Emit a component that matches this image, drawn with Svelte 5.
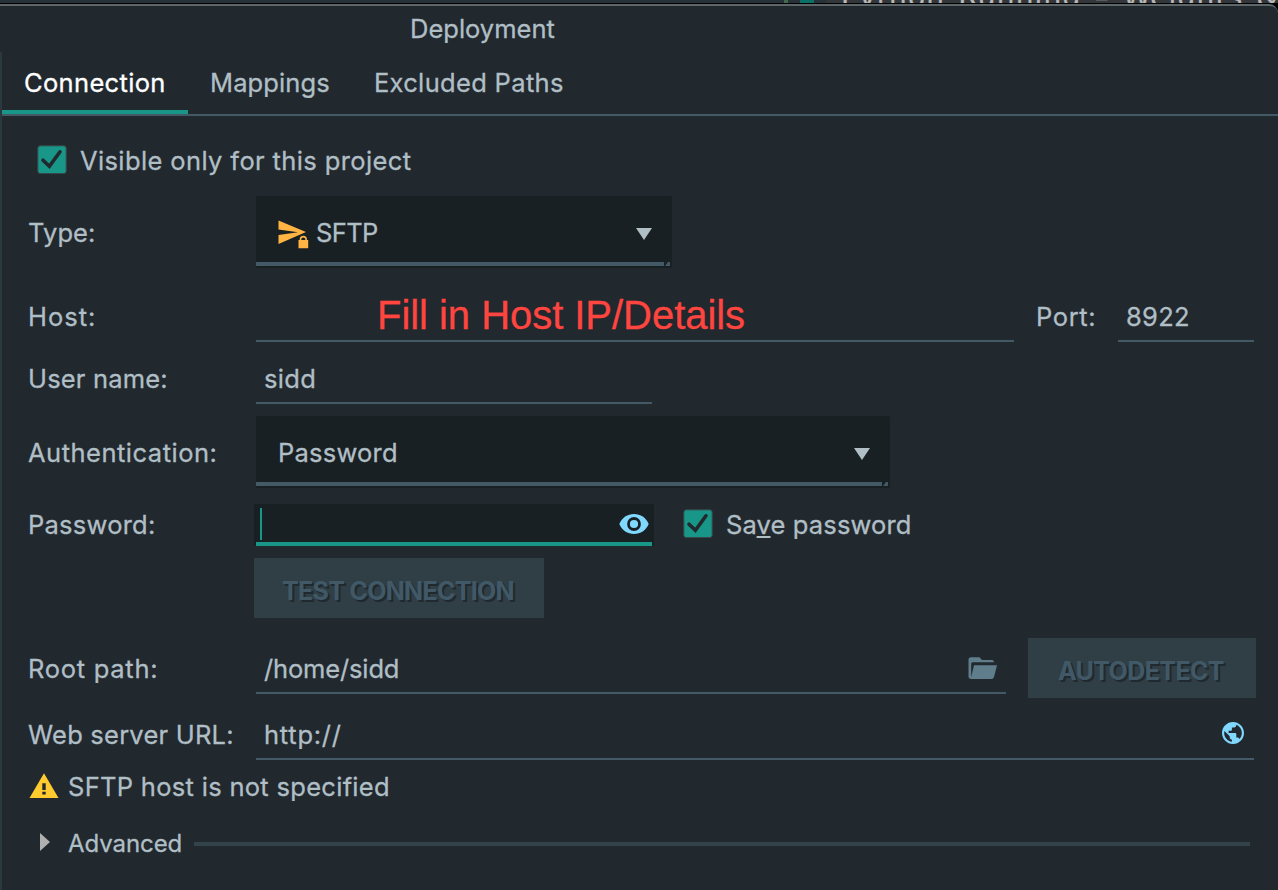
<script>
  const tabs = [
    { name: 'Connection', spacing: 0.34 },
    { name: 'Mappings', spacing: 0.12 },
    { name: 'Excluded Paths', spacing: 0.33 },
  ];
</script>

{#snippet check()}
  <svg class="check" width="30" height="30" viewBox="0 0 30 30">
    <rect x="0.8" y="0.8" width="28.4" height="27.8" rx="2.4" fill="#189687" stroke="#3b4448" stroke-width="1" />
    <path d="M6 15.2 L12.4 21.2 L23 6.8" fill="none" stroke="#21282e" stroke-width="3.6" stroke-linecap="round" />
  </svg>
{/snippet}

{#snippet text(value, spacing)}
  <span style:letter-spacing="{spacing}px">{value}</span>
{/snippet}

<div class="window">
  <div class="behind">
    <i class="green"></i><i class="teal"></i>
    <div class="pane"><span>Python Running – Weights &amp;</span></div>
  </div>
  <header>{@render text('Deployment', 0)}</header>
  <main>
    <nav>
      {#each tabs as tab, i}
        <div class="tab" class:active={i === 0}>{@render text(tab.name, tab.spacing)}</div>
      {/each}
    </nav>
    <div class="row visible">{@render check()}{@render text('Visible only for this project', 0.38)}</div>
    <div class="row type">
      <div class="label">{@render text('Type:', 0.1)}</div>
      <div class="select">
        <svg width="32" height="30" viewBox="0 0 32 30" fill="#ffb443">
          <path d="M0.5 0.5 L28 12 L0.5 24 V15 L20 12.2 L0.5 9.5Z" />
          <path d="M20.5 20 H21.7 V19.3 A3.6 3.6 0 0 1 28.9 19.3 V20 H30.2 V28.2 H20.5Z" />
          <path d="M23.3 20 V19.4 A2 2 0 0 1 27.3 19.4 V20Z" fill="#192023" />
        </svg>
        {@render text('SFTP', -0.6)}<b class="down"></b><em></em>
      </div>
    </div>
    <div class="row host">
      <div class="label">{@render text('Host:', 1)}</div>
      <div class="field"><strong>Fill in Host IP/Details</strong></div>
      <div class="port">{@render text('Port:', 0.6)}</div>
      <div class="field number">{@render text('8922', 0.3)}</div>
    </div>
    <div class="row user">
      <div class="label">{@render text('User name:', 0.17)}</div>
      <div class="field">{@render text('sidd', 0.3)}</div>
    </div>
    <div class="row auth">
      <div class="label">{@render text('Authentication:', 0.5)}</div>
      <div class="select">{@render text('Password', 0.22)}<b class="down"></b><em></em></div>
    </div>
    <div class="row pass">
      <div class="label">{@render text('Password:', 0.24)}</div>
      <div class="secret">
        <i></i>
        <svg width="30" height="20" viewBox="0 0 30 20">
          <path d="M0.3 10 C3 3.5 8.5 0 15 0 S27 3.5 29.7 10 C27 16.5 21.5 20 15 20 S3 16.5 0.3 10Z" fill="#80d8ff" />
          <circle cx="15" cy="10" r="5.5" fill="#80d8ff" stroke="#192023" stroke-width="2.8" />
        </svg>
      </div>
      {@render check()}
      <span class="save">Sa<u>v</u>e password</span>
    </div>
    <div class="row test"><button>{@render text('TEST CONNECTION', -0.7)}</button></div>
    <div class="row root">
      <div class="label">{@render text('Root path:', 0.72)}</div>
      <div class="field">
        {@render text('/home/sidd', -0.15)}
        <svg width="30" height="23" viewBox="0 0 30 23" fill="#607d8b">
          <path d="M3 0.3 H11.5 L14 3 H24 Q26 3 26 5.2 H4.5 Q3.2 5.2 3.2 7 V22 Q0.5 21.8 0.5 19.5 V2.8 Q0.5 0.3 3 0.3Z" />
          <path d="M6 8.3 H29 L26 20 Q25.5 22 23.5 22 H2.7Z" />
        </svg>
      </div>
      <button>{@render text('AUTODETECT', -0.6)}</button>
    </div>
    <div class="row web">
      <div class="label">{@render text('Web server URL:', 0.22)}</div>
      <div class="field">
        {@render text('http://', 0.75)}
        <svg width="22" height="22" viewBox="2 2 20 20" fill="#80d8ff">
          <path d="M12 2C6.48 2 2 6.48 2 12s4.48 10 10 10 10-4.48 10-10S17.52 2 12 2zm-1 17.93c-3.95-.49-7-3.85-7-7.93 0-.62.08-1.21.21-1.79L9 15v1c0 1.1.9 2 2 2v1.93zm6.9-2.54c-.26-.81-1-1.39-1.9-1.39h-1v-3c0-.55-.45-1-1-1H8v-2h2c.55 0 1-.45 1-1V7h2c1.1 0 2-.9 2-2v-.41c2.93 1.19 5 4.06 5 7.41 0 2.08-.8 3.97-2.1 5.39z" />
        </svg>
      </div>
    </div>
    <div class="row warn">
      <svg width="30" height="26" viewBox="0 0 30 26">
        <path d="M15 0.2 L29.5 25 H0.5Z" fill="#ffcb2f" />
        <path d="M13.3 10.3 H16.7 V17 H13.3Z M13.3 18.8 H16.7 V21.4 H13.3Z" fill="#21282e" />
      </svg>
      {@render text('SFTP host is not specified', 0.3)}
    </div>
    <div class="row advanced"><b class="right"></b>{@render text('Advanced', -0.07)}<hr /></div>
  </main>
</div>

<style>
  :global(body) { margin: 0; background: #21282e; }
  * { box-sizing: border-box; }
  .window { width: 1278px; height: 890px; overflow: hidden; display: flex; flex-direction: column; background: #21282e; color: #b0bec5; font: 400 25.5px/32px Inter, sans-serif; -webkit-text-stroke: 0.3px; }
  span, strong { white-space: nowrap; }
  svg { display: block; flex: none; }

  .behind { height: 10px; margin-bottom: -6px; display: flex; background: linear-gradient(#263238 3px, #000 3px); overflow: hidden; flex: none; }
  .behind i { height: 3px; }
  .behind .green { width: 4px; margin-left: 784px; background: #43694a; }
  .behind .teal { width: 14px; margin-left: 12px; background: #0b7068; }
  .pane { margin-left: 12px; flex: 1; height: 3px; background: #34373a; color: #b9b9b9; overflow: hidden; }
  .pane span { display: block; margin: -18px 0 0 15px; letter-spacing: 1.2px; word-spacing: 3px; font: 28px/32px "DejaVu Sans", sans-serif; }
  header { position: relative; height: 48px; padding: 7px 0 0 410px; background: #21282e; border-top: 2px solid #5d6668; border-radius: 0 9px 0 0; flex: none; }

  main { border-left: 2px solid #2b393f; flex: 1; display: flex; flex-direction: column; }
  nav { height: 64px; display: flex; border-bottom: 2px solid #435a66; flex: none; }
  .tab { padding: 15px 22px 0; height: 62px; }
  .active { color: #fff; width: 186px; border-bottom: 4px solid #189687; }

  .row { display: flex; align-items: flex-start; flex: none; }
  .label { width: 254px; padding-left: 26px; flex: none; }
  .field { display: flex; flex: none; align-self: stretch; padding-left: 8px; border-bottom: 2px solid #435a66; }
  .field svg { margin-left: auto; }
  .select { position: relative; height: 72px; background: #192023; border-radius: 2px; display: flex; padding: 21px 20px 0 22px; }
  .select em { position: absolute; left: 0; bottom: 2px; right: 2px; height: 4px; background: #435a66; clip-path: polygon(0 0, calc(100% - 6px) 0, calc(100% - 6px) 100%, calc(100% - 5px) 100%, calc(100% - 2px) 0, 100% 0, 100% 100%, 0 100%); }
  .select svg { margin: 3px 6px 0 0; }
  .down { margin: 11px 0 0 auto; width: 16px; height: 12px; background: #b0bec5; clip-path: polygon(0 0, 100% 0, 50% 100%); }
  button { height: 60px; padding: 2px 2px 0 0; border: 0; background: #303e45; color: #415967; font: 700 25px/62px Inter, sans-serif; -webkit-text-stroke: 0; text-shadow: 2px 2px #20292e; text-align: center; flex: none; }

  .visible { height: 80px; padding: 29px 0 0 35px; gap: 13px; }
  .type { height: 80px; }
  .type .label { padding-top: 21px; }
  .type .select { width: 416px; }
  .host { height: 66px; padding-top: 10px; }
  .host .label, .port, .number { padding-top: 15px; }
  .host .field { width: 758px; padding-left: 121px; }
  .host .number { width: 136px; padding-left: 8px; }
  .port { width: 104px; padding-left: 22px; }
  strong { font: 40px/46px "Liberation Sans", Arial, sans-serif; padding-top: 6px; color: #ff453f; letter-spacing: -0.04px; }
  .user { height: 62px; }
  .user .label, .user .field { padding-top: 21px; }
  .user .field { width: 396px; }
  .auth { height: 100px; padding-top: 12px; }
  .auth .label { padding-top: 21px; }
  .auth .select { width: 634px; }
  .pass { height: 42px; }
  .pass .label { width: 252px; padding-top: 5px; }
  .secret { width: 400px; height: 42px; background: linear-gradient(#189687, #189687) 2px 38px / 396px 4px no-repeat #192023; display: flex; justify-content: space-between; padding: 0 5px 0 6px; }
  .secret i { width: 2px; height: 32px; margin-top: 4px; background: #189687; }
  .secret svg { margin-top: 10px; }
  .pass .check { margin: 5px 13px 0 29px; }
  .save { padding-top: 5px; letter-spacing: 0.13px; }
  u { text-decoration-thickness: 2px; text-underline-offset: 2px; text-decoration-skip-ink: none; }
  .test { height: 92px; padding: 12px 0 0 252px; }
  .test button { width: 290px; }
  .root { height: 60px; }
  .root .label, .root .field { padding-top: 15px; }
  .root .field { width: 750px; height: 56px; align-self: flex-start; padding-right: 8px; }
  .root .field svg { margin-top: 4px; }
  .root button { width: 228px; margin-left: 22px; }
  .web { height: 62px; }
  .web .label, .web .field { padding-top: 21px; }
  .web .field { width: 998px; padding-right: 10px; }
  .web .field svg { margin-top: 3px; }
  .warn { height: 52px; padding: 11px 0 0 27px; gap: 9px; }
  .warn svg { margin-top: 2px; }
  .advanced { padding: 16px 28px 0 38px; font-size: 24px; }
  .right { width: 10px; height: 18px; margin: 5px 18px 0 0; background: #b0b0b0; clip-path: polygon(0 0, 100% 50%, 0 100%); }
  hr { flex: 1; height: 4px; border: 0; margin: 14px 0 0 12px; background: #32434a; }
</style>
